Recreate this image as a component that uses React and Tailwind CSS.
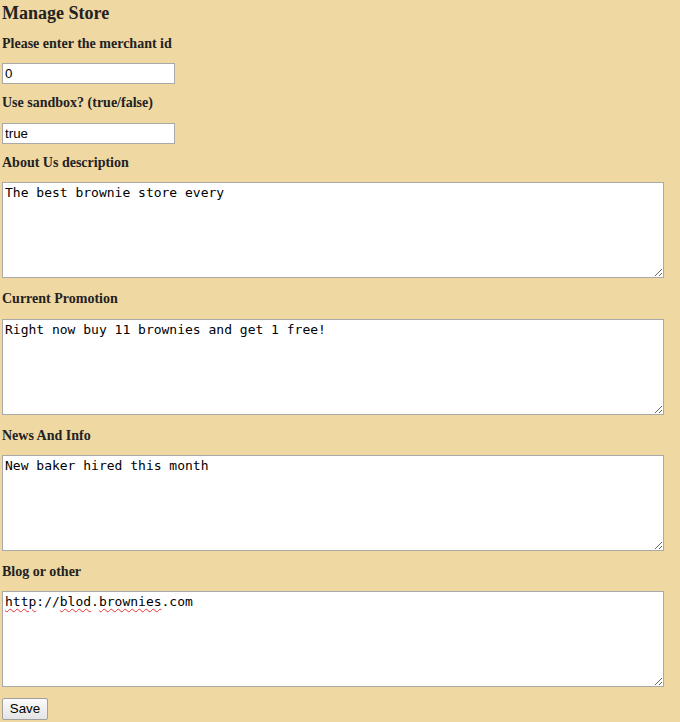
const fields = [
  { label: "About Us description", value: "The best brownie store every", gap: "mt-[11px]", inner: "mt-[11px]" },
  { label: "Current Promotion", value: "Right now buy 11 brownies and get 1 free!", gap: "mt-[13px]", inner: "mt-[12px]" },
  { label: "News And Info", value: "New baker hired this month", gap: "mt-[13px]", inner: "mt-[11px]" },
];

const Label = ({ children }) => (
  <div className="text-[14px] leading-[16px] font-bold text-[#222]">{children}</div>
);

const inputCls =
  "block w-[173px] h-[21px] border border-[#a9a9a9] bg-white px-[2px] text-[13.33px] text-black outline-none";
const areaCls =
  "block w-[662px] h-[96px] border border-[#a9a9a9] bg-white p-[2px] text-[13px] leading-[15px] text-black outline-none";

export default function App() {
  return (
    <div
      className="min-h-[722px] bg-[#f0d8a3] pl-[2px] pt-[2px] pb-[3px]"
      style={{ fontFamily: '"Liberation Serif", serif' }}
    >
      <h1 className="text-[18px] leading-[22px] font-bold text-[#222]">Manage Store</h1>

      <div className="mt-[12px]">
        <Label>Please enter the merchant id</Label>
        <input
          className={`${inputCls} mt-[11px] font-['Liberation_Sans',sans-serif]`}
          defaultValue="0"
        />
      </div>

      <div className="mt-[11px]">
        <Label>Use sandbox? (true/false)</Label>
        <input
          className={`${inputCls} mt-[12px] font-['Liberation_Sans',sans-serif]`}
          defaultValue="true"
        />
      </div>

      {fields.map((f) => (
        <div key={f.label} className={f.gap}>
          <Label>{f.label}</Label>
          <textarea
            className={`${areaCls} ${f.inner} font-['DejaVu_Sans_Mono',monospace]`}
            defaultValue={f.value}
            spellCheck={false}
          />
        </div>
      ))}

      <div className="mt-[13px]">
        <Label>Blog or other</Label>
        <div className="relative mt-[11px] w-[662px]">
          <textarea
            className={`${areaCls} font-['DejaVu_Sans_Mono',monospace]`}
            defaultValue="http://blod.brownies.com"
            spellCheck={false}
          />
          {/* spellcheck squiggles */}
          <div className="pointer-events-none absolute left-[3px] top-[3px] whitespace-pre text-[13px] leading-[15px] text-transparent font-['DejaVu_Sans_Mono',monospace]">
            <span className="underline decoration-wavy decoration-[#e33] decoration-1 underline-offset-[2px]">http</span>
            {"://"}
            <span className="underline decoration-wavy decoration-[#e33] decoration-1 underline-offset-[2px]">blod</span>
            {"."}
            <span className="underline decoration-wavy decoration-[#e33] decoration-1 underline-offset-[2px]">brownies</span>
            {".com"}
          </div>
        </div>
      </div>

      <button className="mt-[11px] h-[22px] w-[46px] rounded-[2px] border border-[#a0a0a0] bg-gradient-to-b from-[#fbfbfb] to-[#e4e4e4] text-[13.33px] text-black font-['Liberation_Sans',sans-serif]">
        Save
      </button>
    </div>
  );
}
